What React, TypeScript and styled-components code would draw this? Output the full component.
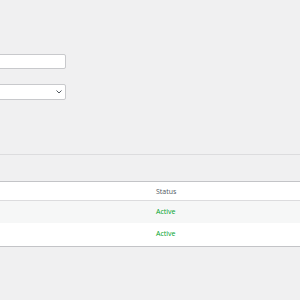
import React from "react";
import styled, { createGlobalStyle } from "styled-components";

const Global = createGlobalStyle`
  html, body { margin: 0; padding: 0; background: #f0f0f1; }
  body { font-family: "Open Sans", "Liberation Sans", sans-serif; overflow: hidden; }
`;

const Page = styled.div`
  width: 300px;
  height: 300px;
  overflow: hidden;
  display: flex;
  flex-direction: column;
`;

const Form = styled.div`
  display: flex;
  flex-direction: column;
  gap: 15px;
  padding-top: 54px;
  margin-left: -20px;
  width: 86px;
`;

const Input = styled.input`
  box-sizing: border-box;
  width: 100%;
  height: 15px;
  border: 1px solid #c8c9cc;
  border-radius: 2px;
  background: #fff;
  padding: 0;
  margin: 0;
`;

const Select = styled.div`
  box-sizing: border-box;
  height: 16px;
  border: 1px solid #c8c9cc;
  border-radius: 2px;
  background: #fff;
  display: flex;
  align-items: center;
  justify-content: flex-end;
  padding-right: 3px;
`;

const Section = styled.div`
  margin-top: 54px;
  border-top: 1px solid #dcdcde;
  padding-top: 26px;
`;

const Table = styled.div`
  margin-left: -20px;
  width: 340px;
  background: #fff;
  border: 1px solid #c3c4c7;
  display: flex;
  flex-direction: column;
`;

const Row = styled.div<{ $alt?: boolean; $head?: boolean; $h: number }>`
  box-sizing: border-box;
  display: grid;
  grid-template-columns: 175px 1fr;
  align-items: center;
  height: ${(p) => p.$h}px;
  padding-bottom: ${(p) => (p.$head ? 0 : 2)}px;
  background: ${(p) => (p.$alt ? "#f6f7f7" : "#fff")};
  border-bottom: ${(p) => (p.$head ? "1px solid #dcdcde" : "none")};
`;

const Cell = styled.div<{ $green?: boolean }>`
  font-size: 7px;
  line-height: 9px;
  color: ${(p) => (p.$green ? "#00a32a" : "#50575e")};
  white-space: nowrap;
`;

export default function App() {
  return (
    <Page>
      <Global />
      <Form>
        <Input />
        <Select>
          <svg width="6" height="4" viewBox="0 0 6 4">
            <path d="M0.5 0.5 L3 3 L5.5 0.5" fill="none" stroke="#50575e" strokeWidth="1" />
          </svg>
        </Select>
      </Form>
      <Section>
        <Table>
          <Row $head $h={19}>
            <div />
            <Cell>Status</Cell>
          </Row>
          <Row $alt $h={22}>
            <div />
            <Cell $green>Active</Cell>
          </Row>
          <Row $h={23}>
            <div />
            <Cell $green>Active</Cell>
          </Row>
        </Table>
      </Section>
    </Page>
  );
}
